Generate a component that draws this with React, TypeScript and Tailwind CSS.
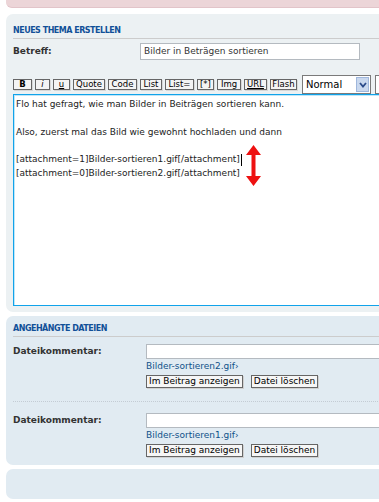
import React from "react";

const tools: { label: string; w: string; extra: string }[] = [
  { label: "B", w: "w-[19px]", extra: "font-bold" },
  { label: "i", w: "w-[15px]", extra: "italic" },
  { label: "u", w: "w-[17px]", extra: "underline" },
  { label: "Quote", w: "w-[32px]", extra: "" },
  { label: "Code", w: "w-[29px]", extra: "" },
  { label: "List", w: "w-[22px]", extra: "" },
  { label: "List=", w: "w-[29px]", extra: "" },
  { label: "[*]", w: "w-[17px]", extra: "" },
  { label: "Img", w: "w-[24px]", extra: "" },
  { label: "URL", w: "w-[23px]", extra: "underline" },
  { label: "Flash", w: "w-[27px]", extra: "" },
];

function Attachment({ file }: { file: string }) {
  return (
    <div className="flex">
      <div className="w-[136px] h-[15px] flex items-center font-bold text-[9px] text-[#333]">
        Dateikommentar:
      </div>
      <div className="flex flex-col">
        <div className="w-[260px] h-[15px] border border-[#b4bac0] bg-white" />
        <div className="h-[16px] flex items-center text-[9px] text-[#105289]">
          {file}›
        </div>
        <div className="flex gap-[8px]">
          <div className="h-[13px] px-[2px] border border-[#666] bg-[#f6f6f6] flex items-center text-[9px] text-black shadow-[1px_1px_0_#d0d0d0]">
            Im Beitrag anzeigen
          </div>
          <div className="h-[13px] px-[2px] border border-[#666] bg-[#f6f6f6] flex items-center text-[9px] text-black shadow-[1px_1px_0_#d0d0d0]">
            Datei löschen
          </div>
        </div>
      </div>
    </div>
  );
}

export default function App() {
  return (
    <div className="w-[379px] h-[502px] overflow-hidden bg-white font-['DejaVu_Sans',Verdana,sans-serif] text-[#333]">
      {/* top error/rules bar */}
      <div className="ml-[6px] w-[400px] h-[8px] bg-[#ecd5d8] rounded-b-[6px] border-b border-[#e2c4c9]" />

      {/* Panel 1 */}
      <div className="ml-[6px] mt-[6px] w-[400px] bg-[#ecf1f3] rounded-[7px] pt-[10px] pb-[6px] pl-[7px]">
        <div className="h-[15px] border-b border-[#cccccc] text-[8px] leading-[14px] font-bold text-[#115098] tracking-[-0.5px]">
          NEUES THEMA ERSTELLEN
        </div>
        <div className="mt-[4px] flex items-center h-[17px]">
          <div className="w-[127px] font-bold text-[9px] text-[#333]">Betreff:</div>
          <div className="w-[220px] h-[17px] border border-[#b4bac0] bg-white flex items-center pl-[3px] text-[9px] text-[#333]">
            Bilder in Beträgen sortieren
          </div>
        </div>
        <div className="mt-[15px] h-[19px] flex items-center gap-[3px]">
          {tools.map((t) => (
            <div
              key={t.label}
              className={`${t.w} ${t.extra} h-[11px] border border-[#666] bg-[#f4f4f4] flex items-center justify-center text-[8.5px] leading-[9px] text-black shadow-[1px_1px_0_#d8d8d8]`}
            >
              {t.label}
            </div>
          ))}
          <div className="ml-[2px] w-[69px] h-[19px] border border-[#7a7a7a] bg-white flex items-center justify-between pl-[3px] pr-[1px]">
            <span className="text-[10px] text-black">Normal</span>
            <span className="w-[13px] h-[15px] bg-[#c9d8ee] border border-[#9fb7dc] flex items-center justify-center">
              <svg width="8" height="6" viewBox="0 0 8 6">
                <path d="M1 1 L4 4.5 L7 1" stroke="#2a4a8a" strokeWidth="1.8" fill="none" />
              </svg>
            </span>
          </div>
          <div className="ml-[1px] w-[20px] h-[19px] border border-[#7a7a7a] bg-white" />
        </div>
        <div className="relative h-[212px] border border-[#11a3ea] shadow-[inset_1px_1px_0_#bfe6f8] bg-white px-[2px] pt-[3px] text-[9px] leading-[13.8px] text-[#222]">
          <div>Flo hat gefragt, wie man Bilder in Beiträgen sortieren kann.</div>
          <div>&nbsp;</div>
          <div>Also, zuerst mal das Bild wie gewohnt hochladen und dann</div>
          <div>&nbsp;</div>
          <div className="flex items-center">
            [attachment=1]Bilder-sortieren1.gif[/attachment]
            <span className="inline-block w-[1px] h-[12px] bg-black ml-[1px]" />
          </div>
          <div>[attachment=0]Bilder-sortieren2.gif[/attachment]</div>
          <svg
            className="absolute left-[232px] top-[50px]"
            width="15"
            height="41"
            viewBox="0 0 15 41"
          >
            <path
              d="M7.5 0 L15 10 L9.5 10 L9.5 31 L15 31 L7.5 41 L0 31 L5.5 31 L5.5 10 L0 10 Z"
              fill="#ee1111"
            />
          </svg>
        </div>
      </div>

      {/* Panel 2 */}
      <div className="ml-[6px] mt-[4px] w-[400px] bg-[#e1ebf2] rounded-[7px] pt-[6px] pb-[8px] pl-[7px]">
        <div className="h-[15px] border-b border-[#cccccc] text-[8px] leading-[14px] font-bold text-[#115098] tracking-[-0.5px]">
          ANGEHÄNGTE DATEIEN
        </div>
        <div className="mt-[7px]">
          <Attachment file="Bilder-sortieren2.gif" />
        </div>
        <div className="mt-[13px] border-t border-dotted border-[#c4ccd4]" />
        <div className="mt-[11px]">
          <Attachment file="Bilder-sortieren1.gif" />
        </div>
      </div>

      {/* Panel 3 */}
      <div className="ml-[6px] mt-[4px] w-[400px] h-[30px] bg-[#e1ebf2] rounded-[7px]" />
    </div>
  );
}
